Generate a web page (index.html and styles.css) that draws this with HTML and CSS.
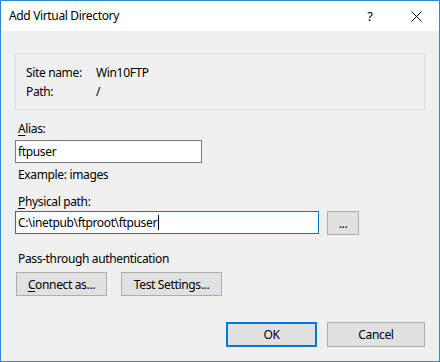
FILE: index.html
```html
<!DOCTYPE html>
<html>
<head>
<meta charset="utf-8">
<link rel="stylesheet" href="styles.css">
</head>
<body>
<div class="window">
  <div class="titlebar">
    <div class="title">Add Virtual Directory</div>
    <div class="tbtn help">?</div>
    <div class="tbtn close">
      <svg width="11" height="11" viewBox="0 0 11 11"><path d="M0.5 0.5 L10.5 10.5 M10.5 0.5 L0.5 10.5" stroke="#000" stroke-width="1" fill="none"/></svg>
    </div>
  </div>
  <div class="body">
    <div class="infobox">
      <div class="row"><span class="key">Site name:</span><span>Win10FTP</span></div>
      <div class="row"><span class="key">Path:</span><span>/</span></div>
    </div>
    <div class="label l-alias"><u>A</u>lias:</div>
    <div class="input alias">ftpuser</div>
    <div class="label l-example">Example: images</div>
    <div class="label l-phys"><u>P</u>hysical path:</div>
    <div class="pathrow">
      <div class="input path focus">C:\inetpub\ftproot\ftpuser<span class="caret"></span></div>
      <div class="btn browse">...</div>
    </div>
    <div class="label l-pass">Pass-through authentication</div>
    <div class="btnrow">
      <div class="btn connect"><u>C</u>onnect as...</div>
      <div class="btn test">Test Settings...</div>
    </div>
    <div class="footer">
      <div class="btn ok">OK</div>
      <div class="btn cancel">Cancel</div>
    </div>
  </div>
</div>
</body>
</html>
```
FILE: styles.css
```css
html, body {
  margin: 0;
  padding: 0;
}
body {
  font-family: "Noto Sans", "Open Sans", sans-serif;
  font-size: 12px;
  letter-spacing: -0.35px;
  color: #000;
}
.window {
  width: 440px;
  height: 362px;
  box-sizing: border-box;
  border: 1px solid #2a88d8;
  background: #f0f0f0;
  display: flex;
  flex-direction: column;
}
.titlebar {
  height: 30px;
  background: #fff;
  display: flex;
  align-items: center;
}
.title {
  flex: 1;
  padding-left: 8px;
  font-size: 12px;
  line-height: 30px;
}
.tbtn {
  width: 46px;
  height: 30px;
  display: flex;
  align-items: center;
  justify-content: center;
}
.help {
  font-size: 13px;
}
.close svg {
  display: block;
}
.body {
  flex: 1;
  padding: 22px 14px 0 14px;
  display: flex;
  flex-direction: column;
  align-items: flex-start;
}
.infobox {
  align-self: stretch;
  border: 1px solid #dcdcdc;
  padding: 9px 10px 8px 10px;
  line-height: 19px;
}
.row {
  display: flex;
}
.key {
  width: 70px;
}
.label {
  line-height: 16px;
  padding-left: 3px;
}
.l-alias { margin-top: 11px; }
.l-example { margin-top: 4px; }
.l-phys { margin-top: 11px; }
.l-pass { margin-top: 16px; }
.input {
  box-sizing: border-box;
  height: 23px;
  border: 1px solid #7a7a7a;
  background: #fff;
  padding: 0 2px;
  line-height: 21px;
  white-space: nowrap;
}
.alias {
  width: 187px;
  margin-top: 3px;
}
.pathrow {
  display: flex;
  gap: 8px;
  margin-top: 1px;
}
.path {
  width: 304px;
}
.focus {
  border-color: #0078d7;
}
.caret {
  display: inline-block;
  width: 1px;
  height: 15px;
  background: #000;
  vertical-align: -3px;
  margin-left: 1px;
}
.btn {
  box-sizing: border-box;
  border: 1px solid #adadad;
  background: #e1e1e1;
  height: 24px;
  display: flex;
  align-items: center;
  justify-content: center;
}
.browse {
  width: 32px;
  height: 24px;
}
.btnrow {
  display: flex;
  gap: 14px;
  margin-top: 5px;
  padding-left: 1px;
}
.connect { width: 91px; }
.test { width: 101px; }
.footer {
  align-self: stretch;
  display: flex;
  justify-content: flex-end;
  gap: 10px;
  margin-top: 26px;
}
.ok {
  width: 91px;
  height: 25px;
  border: 2px solid #0078d7;
}
.cancel {
  width: 98px;
  height: 25px;
}
u {
  text-decoration: underline;
  text-underline-offset: 2px;
}
```
